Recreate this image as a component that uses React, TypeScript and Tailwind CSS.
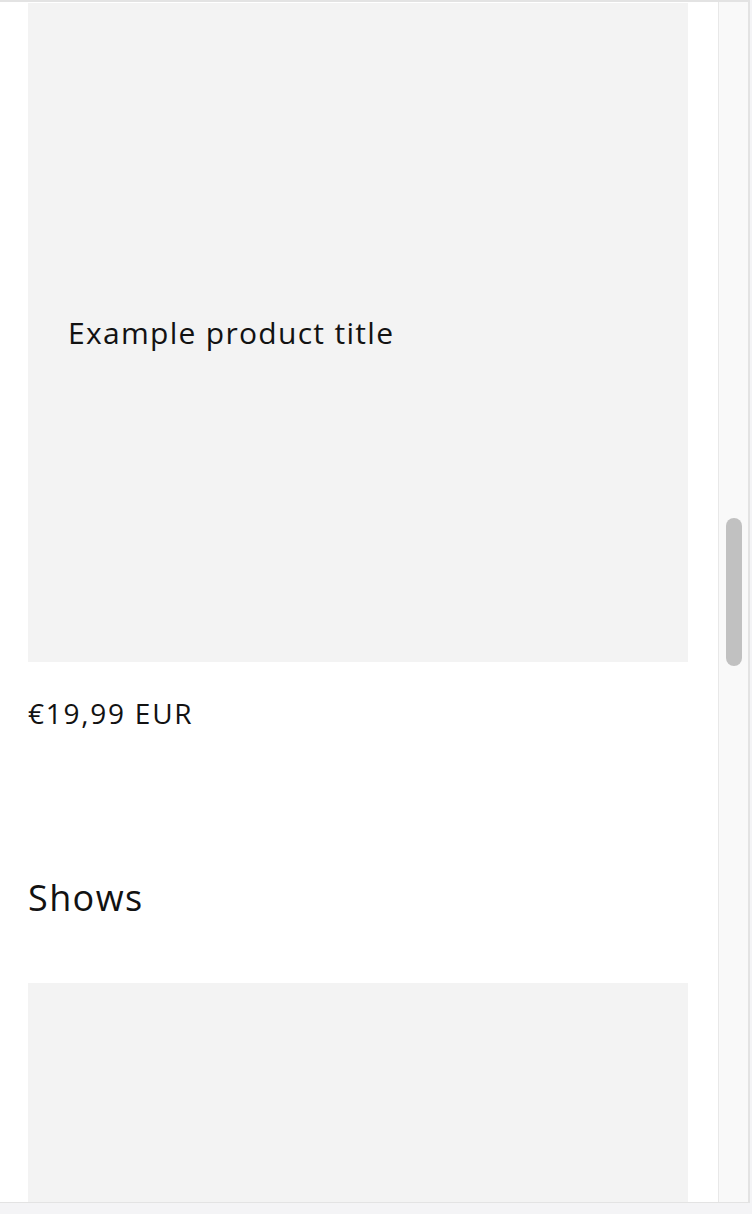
import React from 'react';

const font = { fontFamily: '"Open Sans", "Liberation Sans", sans-serif' };

function ProductCard({ title }: { title?: string }) {
  return (
    <div className="ml-[28px] w-[660px] h-[659px] bg-[#f3f3f3] flex items-center px-[40px]">
      {title && (
        <h3 className="text-[30px] leading-none tracking-[1.3px] text-[#121212]">{title}</h3>
      )}
    </div>
  );
}

export default function App() {
  return (
    <div className="w-[752px] h-[1214px] bg-[#f4f4f6] overflow-hidden" style={font}>
      <div className="w-[750px] h-[1203px] flex border-t-2 border-b border-r-2 border-[#e3e3e3] bg-white">
        {/* page content */}
        <div className="w-[718px] h-full overflow-hidden pt-[1px]">
          <ProductCard title="Example product title" />
          <p className="mt-[37px] pl-[28px] text-[28px] leading-none tracking-[1.75px] text-[#121212]">
            €19,99 EUR
          </p>
          <h2 className="mt-[153px] pl-[28px] text-[36px] leading-none tracking-[1.4px] text-[#121212]">
            Shows
          </h2>
          <div className="mt-[67px]">
            <ProductCard />
          </div>
        </div>
        {/* scrollbar */}
        <div className="w-[30px] h-full border-l border-[#e8e8e8] bg-[#f9f9f9] pt-[516px] pl-[7px]">
          <div className="w-[16px] h-[148px] rounded-full bg-[#c1c1c1]" />
        </div>
      </div>
    </div>
  );
}
